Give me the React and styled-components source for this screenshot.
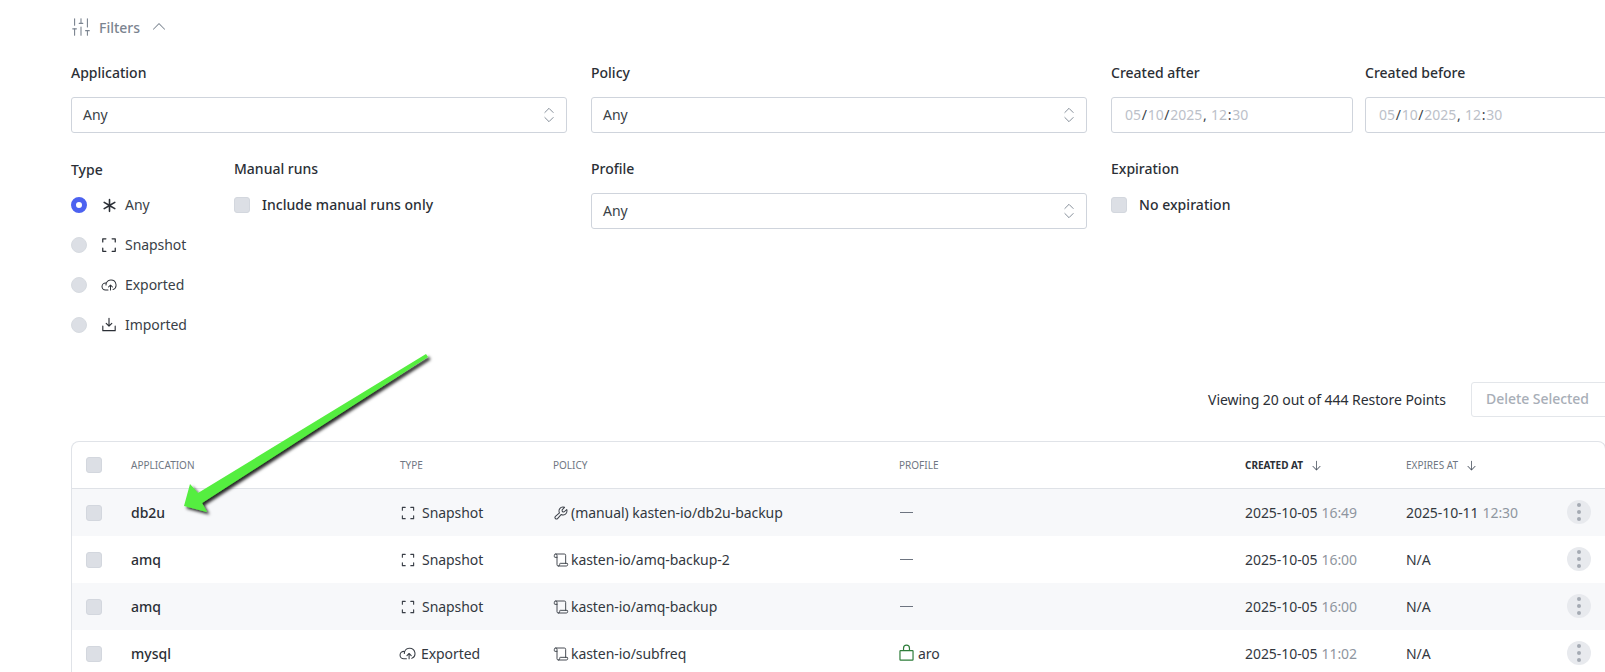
import React from "react";
import styled, { createGlobalStyle } from "styled-components";
import { SlidersVertical, ChevronsUpDown, Scroll } from "lucide-react";
import {
  PiCaretUpLight, PiAsteriskBold, PiCornersOut, PiCloudArrowUp, PiDownloadSimple,
  PiWrench, PiLockSimple, PiArrowDown,
} from "react-icons/pi";

const Global = createGlobalStyle`
  html, body { margin: 0; padding: 0; background: #fff; height: 672px; overflow: hidden; }
  body { font-family: "Noto Sans", "Open Sans", sans-serif; font-size: 14px; color: #2b2f36; }
  * { box-sizing: border-box; }
`;

const Page = styled.div`
  position: relative;
  width: 1605px;
  height: 672px;
  overflow: hidden;
  padding-left: 71px;
`;

const FilterToggle = styled.div`
  height: 54px;
  display: flex;
  align-items: center;
  color: #7b8490;
  font-weight: 500;
  font-size: 14px;
  svg { flex: none; }
  & > svg:first-child { margin-left: -1px; }
`;
const FilterLabel = styled.span`
  margin: 0 10px 0 7px;
`;

const FilterGrid = styled.div`
  display: grid;
  grid-template-columns: 496px 496px 242px 242px;
  column-gap: 24px;
  margin-top: 9px;
  width: 1534px;
  & > :nth-child(4) { margin-left: -12px; }
`;
const Field = styled.div`
  display: flex;
  flex-direction: column;
  min-height: 96px;
`;
const TypeRow = styled.div`
  display: flex;
`;
const Label = styled.div`
  font-weight: 500;
  line-height: 20px;
  height: 20px;
  color: #2b2f36;
  margin-bottom: ${(p) => p.$gap || 14}px;
  position: relative;
  top: ${(p) => p.$nudge || 0}px;
`;
const Select = styled.div`
  height: 36px;
  border: 1px solid #cfd4dc;
  border-radius: 3px;
  padding: 0 7px 0 11px;
  display: flex;
  align-items: center;
  justify-content: space-between;
  color: #3a3f47;
  svg { color: #7b8490; }
`;
const RaisedText = styled.span`
  margin-bottom: 2px;
  letter-spacing: -0.05px;
`;
const DateInput = styled.div`
  height: 36px;
  border: 1px solid #cfd4dc;
  border-radius: 3px;
  width: 242px;
  padding: 0 13px 2px;
  display: flex;
  align-items: center;
  color: #bcc1c9;
`;
const Sep = styled.span`
  color: #3a3f47;
  margin: 0 0.7px;
`;
const TypeColumn = styled.div`
  width: 163px;
  flex: none;
`;
const RadioRow = styled.div`
  height: 40px;
  display: flex;
  align-items: center;
  color: #3a3f47;
`;
const IconSlot = styled.span`
  width: 20px;
  height: 20px;
  flex: none;
  margin: 0 6px 0 12px;
  display: flex;
  align-items: center;
  justify-content: center;
  color: #2b2f36;
`;
const Radio = styled.span`
  width: 16px;
  height: 16px;
  border-radius: 50%;
  flex: none;
  background: ${(p) => (p.$on ? "#fff" : "#dcdfe5")};
  border: ${(p) => (p.$on ? "5px solid #4c62f0" : "1px solid #d7dbe1")};
`;
const Box = styled.span`
  width: 16px;
  height: 16px;
  border-radius: 3px;
  flex: none;
  background: #dcdfe5;
  border: 1px solid #d3d7de;
  display: block;
`;
const CheckRow = styled.div`
  display: flex;
  align-items: center;
  height: 16px;
  gap: 12px;
  font-weight: 500;
  letter-spacing: 0.04px;
`;
const CheckText = styled.span`
  margin-bottom: 2px;
`;

const Toolbar = styled.div`
  display: flex;
  align-items: center;
  justify-content: flex-end;
  height: 35px;
  margin-top: 37px;
  width: 1538px;
`;
const Viewing = styled.div`
  color: #2b2f36;
  margin-right: 25px;
  letter-spacing: -0.06px;
`;
const DeleteButton = styled.div`
  width: 138px;
  height: 35px;
  flex: none;
  border: 1px solid #e3e6ea;
  border-radius: 3px;
  padding: 0 0 2px 14px;
  display: flex;
  align-items: center;
  color: #a8aeb7;
  font-weight: 500;
  letter-spacing: -0.05px;
`;

const Table = styled.div`
  margin-top: 24px;
  width: 1535px;
  border: 1px solid #e0e3e8;
  border-bottom: 0;
  border-radius: 8px 8px 0 0;
`;
const cols = "59px 269px 153px 346px 346px 161px 161px 1fr";
const HeadRow = styled.div`
  display: grid;
  grid-template-columns: ${cols};
  align-items: center;
  height: 47px;
  border-bottom: 1px solid #dfe2e7;
`;
const Head = styled.div`
  font-size: 10px;
  text-transform: uppercase;
  color: ${(p) => (p.$active ? "#2b2f36" : "#6f7783")};
  font-weight: ${(p) => (p.$active ? 700 : 400)};
  display: flex;
  align-items: center;
  gap: 7px;
  svg { color: #4f5763; }
`;
const Row = styled.div`
  display: grid;
  grid-template-columns: ${cols};
  align-items: center;
  height: 47px;
  background: ${(p) => (p.$alt ? "#f7f8fa" : "#fff")};
`;
const BoxCell = styled.div`
  padding-left: 14px;
`;
const AppName = styled.div`
  font-weight: 500;
  color: #2b2f36;
`;
const Cell = styled.div`
  display: flex;
  align-items: center;
  color: #33383f;
  white-space: nowrap;
  letter-spacing: -0.06px;
`;
const TypeCell = styled(Cell)`
  gap: 5px;
  svg { margin-left: -1px; color: #3a3f47; flex: none; }
`;
const PolicyCell = styled(Cell)`
  gap: 2px;
  svg { color: #3a3f47; flex: none; }
`;
const Dash = styled.span`
  display: block;
  width: 13px;
  height: 1px;
  background: #6d7480;
  margin-left: 1px;
`;
const ProfileCell = styled(Cell)`
  gap: 2px;
  svg { color: #2e7d3a; margin-left: -2px; flex: none; }
`;
const Time = styled.span`
  color: #8f96a0;
  margin-left: 4px;
`;
const MenuCell = styled.div`
  display: flex;
  align-items: center;
  position: relative;
  top: -1px;
`;
const MenuButton = styled.div`
  width: 24px;
  height: 24px;
  border-radius: 50%;
  background: #e8eaee;
  display: flex;
  flex-direction: column;
  align-items: center;
  justify-content: center;
  gap: 3px;
`;
const Dot = styled.i`
  width: 4px;
  height: 4px;
  border-radius: 50%;
  background: #a4aab3;
  display: block;
`;
const ArrowLayer = styled.svg`
  position: absolute;
  left: 0;
  top: 0;
  pointer-events: none;
`;

const DateValue = () => (
  <DateInput>
    05<Sep>/</Sep>10<Sep>/</Sep>2025<Sep>,</Sep>&nbsp;12<Sep>:</Sep>30
  </DateInput>
);

const Caret = () => <ChevronsUpDown size={20} strokeWidth={1.1} />;

const rows = [
  { app: "db2u", type: "Snapshot", manual: true, policy: "(manual) kasten-io/db2u-backup", date: "2025-10-05", time: "16:49", exp: "2025-10-11", expT: "12:30" },
  { app: "amq", type: "Snapshot", policy: "kasten-io/amq-backup-2", date: "2025-10-05", time: "16:00", exp: "N/A" },
  { app: "amq", type: "Snapshot", policy: "kasten-io/amq-backup", date: "2025-10-05", time: "16:00", exp: "N/A" },
  { app: "mysql", type: "Exported", policy: "kasten-io/subfreq", profile: "aro", date: "2025-10-05", time: "11:02", exp: "N/A" },
];

export default function App() {
  return (
    <>
      <Global />
      <Page>
        <FilterToggle>
          <SlidersVertical size={22} strokeWidth={1.2} />
          <FilterLabel>Filters</FilterLabel>
          <PiCaretUpLight size={18} />
        </FilterToggle>

        <FilterGrid>
          <Field>
            <Label>Application</Label>
            <Select><RaisedText>Any</RaisedText><Caret /></Select>
          </Field>
          <Field>
            <Label>Policy</Label>
            <Select><RaisedText>Any</RaisedText><Caret /></Select>
          </Field>
          <Field>
            <Label>Created after</Label>
            <DateValue />
          </Field>
          <Field>
            <Label>Created before</Label>
            <DateValue />
          </Field>

          <TypeRow>
            <TypeColumn>
              <Label $gap={6} $nudge={1}>Type</Label>
              <RadioRow><Radio $on /><IconSlot><PiAsteriskBold size={17} /></IconSlot><RaisedText>Any</RaisedText></RadioRow>
              <RadioRow><Radio /><IconSlot><PiCornersOut size={20} /></IconSlot><RaisedText>Snapshot</RaisedText></RadioRow>
              <RadioRow><Radio /><IconSlot><PiCloudArrowUp size={16} /></IconSlot><RaisedText>Exported</RaisedText></RadioRow>
              <RadioRow><Radio /><IconSlot><PiDownloadSimple size={18} /></IconSlot><RaisedText>Imported</RaisedText></RadioRow>
            </TypeColumn>
            <div>
              <Label $gap={18}>Manual runs</Label>
              <CheckRow><Box /><CheckText>Include manual runs only</CheckText></CheckRow>
            </div>
          </TypeRow>
          <Field>
            <Label>Profile</Label>
            <Select><RaisedText>Any</RaisedText><Caret /></Select>
          </Field>
          <div>
            <Label $gap={18}>Expiration</Label>
            <CheckRow><Box /><CheckText>No expiration</CheckText></CheckRow>
          </div>
          <div />
        </FilterGrid>

        <Toolbar>
          <Viewing>Viewing 20 out of 444 Restore Points</Viewing>
          <DeleteButton>Delete Selected</DeleteButton>
        </Toolbar>

        <Table>
          <HeadRow>
            <BoxCell><Box /></BoxCell>
            <Head>Application</Head>
            <Head>Type</Head>
            <Head>Policy</Head>
            <Head>Profile</Head>
            <Head $active>Created at <PiArrowDown size={13} /></Head>
            <Head>Expires at <PiArrowDown size={13} /></Head>
            <div />
          </HeadRow>
          {rows.map((r, i) => (
            <Row key={i} $alt={i % 2 === 0}>
              <BoxCell><Box /></BoxCell>
              <AppName>{r.app}</AppName>
              <TypeCell>
                {r.type === "Exported" ? <PiCloudArrowUp size={17} /> : <PiCornersOut size={18} />}
                {r.type}
              </TypeCell>
              <PolicyCell>
                {r.manual ? <PiWrench size={16} /> : <Scroll size={16} strokeWidth={1.4} />}
                {r.policy}
              </PolicyCell>
              <ProfileCell>
                {r.profile ? (<><PiLockSimple size={19} />{r.profile}</>) : <Dash />}
              </ProfileCell>
              <Cell>{r.date}<Time>{r.time}</Time></Cell>
              <Cell>{r.exp}{r.expT && <Time>{r.expT}</Time>}</Cell>
              <MenuCell>
                <MenuButton><Dot /><Dot /><Dot /></MenuButton>
              </MenuCell>
            </Row>
          ))}
        </Table>

        <ArrowLayer width="1605" height="672" viewBox="0 0 1605 672">
          <defs>
            <filter id="arrowShadow" x="-10%" y="-10%" width="120%" height="120%">
              <feDropShadow dx="2.5" dy="2.5" stdDeviation="1.6" floodColor="#000" floodOpacity="0.85" />
            </filter>
          </defs>
          <polygon
            points="428,357 202,503 207,512 184,506 190,484 198,493 426,354"
            fill="#55ee3f"
            filter="url(#arrowShadow)"
          />
        </ArrowLayer>
      </Page>
    </>
  );
}
